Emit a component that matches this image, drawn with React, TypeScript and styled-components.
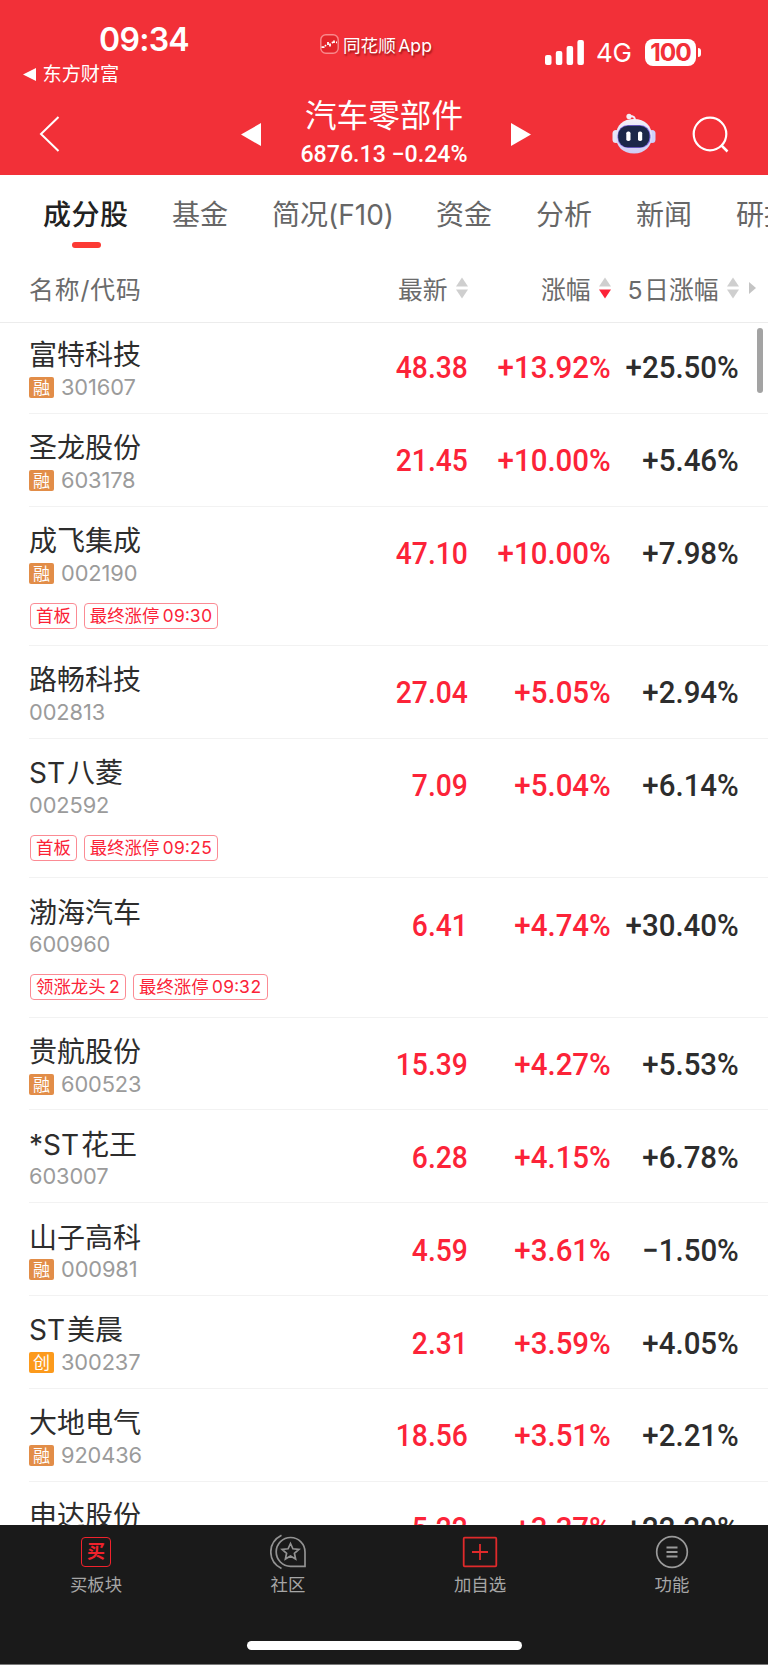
import React from "react";
import styled, { createGlobalStyle } from "styled-components";

const GlobalStyle = createGlobalStyle`
  * { box-sizing: border-box; }
  body { margin: 0; background: #fff; }
`;

const text = `"Inter", "Noto Sans CJK SC", sans-serif`;
const digits = `"Roboto", "Noto Sans CJK SC", sans-serif`;

const Screen = styled.div`
  display: flex;
  flex-direction: column;
  width: 768px;
  height: 1665px;
  overflow: hidden;
  background: #fff;
  font-family: ${text};
  color: #2d2d2d;
  white-space: nowrap;
`;

const Header = styled.header`
  flex: none;
  height: 174.5px;
  background: #f23038;
  color: #fff;
`;

const StatusBar = styled.div`
  display: grid;
  grid-template-columns: 320px 1fr auto;
  height: 90px;
  padding-right: 67px;
`;

const StatusLeft = styled.div`
  padding-top: 20px;
`;

const Clock = styled.div`
  padding-left: 99px;
  font-size: 32px;
  line-height: 40px;
  font-weight: 600;
  letter-spacing: -0.7px;
`;

const BackApp = styled.div`
  display: flex;
  align-items: center;
  gap: 7px;
  padding-left: 22.5px;
  margin-top: 1px;
  font-size: 19.2px;
  line-height: 27px;
`;

const Source = styled.div`
  display: flex;
  align-items: center;
  gap: 4px;
  height: 20px;
  margin-top: 34px;
  font-size: 17.6px;
  word-spacing: -2.5px;
  text-shadow: 1px 2px 2px rgba(90, 0, 0, 0.6);
`;

const Signals = styled.div`
  display: flex;
  align-items: center;
  height: 28px;
  margin-top: 38px;
`;

const Network = styled.span`
  margin: 2px 14px 0 12px;
  width: 35px;
  font-size: 26px;
  line-height: 28px;
  letter-spacing: -0.4px;
`;

const Battery = styled.div`
  width: 51px;
  height: 27px;
  border-radius: 8px;
  background: #fff;
  color: #f23038;
  font-size: 24.5px;
  font-weight: 700;
  line-height: 27px;
  letter-spacing: -1px;
  text-align: center;
`;

const BatteryTip = styled.div`
  width: 3px;
  height: 9px;
  margin-left: 2px;
  border-radius: 0 4px 4px 0;
  background: #fff;
`;

const TitleBar = styled.div`
  display: flex;
  align-items: center;
  height: 84px;
  padding: 4px 39px 0 39px;

  svg { flex: none; display: block; }
`;

const TitleNav = styled.div`
  display: flex;
  align-items: center;
  justify-content: space-between;
  width: 290px;
  margin-left: 181px;
  margin-right: 81px;
`;

const TitleText = styled.div`
  display: flex;
  flex-direction: column;
  align-items: center;
  margin-right: 4px;
`;

const Title = styled.div`
  font-size: 31.6px;
  line-height: 40px;
  font-weight: 400;
`;

const SubTitle = styled.div`
  width: 166px;
  display: flex;
  justify-content: center;
  font-family: ${digits};
  font-size: 24px;
  font-weight: 500;
  line-height: 36px;
  white-space: pre;
  transform: scaleX(0.965);
`;

const Tabs = styled.nav`
  flex: none;
  display: flex;
  height: 83.5px;
  padding: 21px 0 0 43px;
  font-size: 28px;
  line-height: 38px;
`;

const Tab = styled.div<{ $active?: boolean; $width: number }>`
  flex: none;
  display: flex;
  flex-direction: column;
  align-items: flex-start;
  width: ${(p) => p.$width}px;
  color: ${(p) => (p.$active ? "#222" : "#666")};
  font-weight: ${(p) => (p.$active ? 500 : 400)};
  letter-spacing: ${(p) => (p.$active ? 0.5 : 0)}px;

  &::after {
    content: "";
    display: ${(p) => (p.$active ? "block" : "none")};
    width: 29px;
    height: 6px;
    margin: 8px 0 0 29px;
    border-radius: 3px;
    background: #fc3a34;
  }
`;

const columns = `
  display: grid;
  grid-template-columns: 1fr 140px 143px 128px;
`;

const TableHead = styled.div`
  ${columns}
  flex: none;
  height: 65px;
  padding: 0 29px 5px 29px;
  align-items: center;
  border-bottom: 1px solid #ececec;
  font-size: 24.8px;
  color: #6b6b6b;
`;

const HeadCell = styled.div<{ $shift?: number; $tracking?: number }>`
  display: flex;
  justify-content: flex-end;
  align-items: center;
  gap: 8.5px;
  margin-right: ${(p) => p.$shift ?? 0}px;
  letter-spacing: ${(p) => p.$tracking ?? 0}px;
  word-spacing: -5.5px;

  &:first-child { justify-content: flex-start; }
`;

const List = styled.main`
  position: relative;
  flex: 1;
  min-height: 0;
  overflow: hidden;
  margin-top: -2px;
`;

const Scrollbar = styled.div`
  position: absolute;
  top: 7px;
  right: 5px;
  width: 6px;
  height: 65px;
  border-radius: 3px;
  background: #a3a3a3;
`;

const Row = styled.div<{ $tall: boolean }>`
  ${columns}
  height: ${(p) => (p.$tall ? 139.35 : 92.87)}px;
  margin-left: 29px;
  padding-right: 30px;
  align-content: start;
  border-bottom: 1px solid #f2f2f2;
`;

const Stock = styled.div`
  padding-top: 15.3px;
`;

const Name = styled.div`
  height: 37.2px;
  font-size: 28px;
  line-height: 38px;
  word-spacing: -6px;
`;

const CodeLine = styled.div`
  display: flex;
  align-items: center;
  gap: 7px;
  height: 28px;
  font-size: 21.8px;
  letter-spacing: -0.1px;
  color: #9b9b9b;
`;

const Code = styled.span`
  line-height: 26px;
  margin-bottom: 1px;
`;

const Badge = styled.span<{ $color: string }>`
  width: 25px;
  height: 21px;
  border-radius: 2px;
  background: ${(p) => p.$color};
  color: #fff;
  font-size: 17px;
  line-height: 22px;
  letter-spacing: 0;
  text-align: center;
`;

const Tags = styled.div`
  display: flex;
  gap: 7px;
  margin: 15.5px 0 0 1px;
`;

const Tag = styled.span`
  height: 26px;
  padding: 0 5px;
  border: 1px solid #fb8b94;
  border-radius: 4px;
  color: #fb2337;
  font-size: 17.4px;
  line-height: 24px;
  word-spacing: -1.5px;
  font-feature-settings: "tnum";
`;

const Value = styled.div<{ $red?: boolean; $stretch: number }>`
  display: flex;
  justify-content: flex-end;
  padding-top: 27.4px;
  font-family: ${digits};
  font-size: 31px;
  line-height: 40px;
  font-weight: 500;
  color: ${(p) => (p.$red ? "#fc2338" : "#2d2d2d")};
  transform: translateX(0.8px) scaleX(${(p) => p.$stretch});
  transform-origin: right center;
`;

const BottomBar = styled.footer`
  flex: none;
  height: 140px;
  background: #1a1a1a;
  border-bottom: 1px solid #7a7a7a;
`;

const Actions = styled.div`
  display: grid;
  grid-template-columns: repeat(4, 1fr);
  height: 116px;
  padding-top: 9px;
`;

const Action = styled.div`
  display: flex;
  flex-direction: column;
  align-items: center;
  font-size: 17.4px;
  line-height: 26px;
  color: #a6a6a6;

  svg { display: block; margin-bottom: 2px; }
`;

const BuyIcon = styled.span`
  width: 30px;
  height: 30px;
  margin: 3px 0 5px;
  border: 1.6px solid #f0222c;
  border-radius: 4px;
  color: #f0222c;
  font-size: 18px;
  font-weight: 700;
  line-height: 27px;
  text-align: center;
`;

const HomeIndicator = styled.div`
  width: 275px;
  height: 9px;
  margin: 0 auto;
  border-radius: 5px;
  background: #fff;
`;

const SortArrows = ({ down }: { down?: boolean }) => (
  <svg width="12" height="22" viewBox="0 0 12 22">
    <path d="M6 0.5 12 9.5H0Z" fill="#cfcfcf" />
    <path d="M6 21.5 12 12.5H0Z" fill={down ? "#fc2338" : "#cfcfcf"} />
  </svg>
);

const AppLogo = () => (
  <svg width="19" height="20" viewBox="0 0 19 20">
    <rect x="0.8" y="0.8" width="17.4" height="18.4" rx="5" fill="#e3242b" stroke="#f9888b" strokeWidth="1.4" />
    <path d="M1.5 13.2h3M5 12.2l1-1M8 8v3M10 9.5v3M12 9l1-1M14 6.5v2.5M16 8.3h1" stroke="#fff" strokeWidth="1.8" fill="none" />
  </svg>
);

const Robot = () => (
  <svg width="44" height="42" viewBox="0 0 44 42">
    <defs>
      <linearGradient id="shell" x1="0" y1="0" x2="0" y2="1">
        <stop offset="0" stopColor="#f4f1f8" />
        <stop offset="1" stopColor="#cfcdf4" />
      </linearGradient>
    </defs>
    <path d="M23 8c0-4-1-5-6-5" stroke="#f1eefb" strokeWidth="2" fill="none" />
    <circle cx="17" cy="3.4" r="2.6" fill="#f4eff6" />
    <rect x="0.5" y="17" width="7" height="13" rx="3.5" fill="#e6e4f8" />
    <rect x="36.5" y="17" width="7" height="13" rx="3.5" fill="#cfd0fb" />
    <path d="M22 6c11 0 18 7 18 17S33 40.5 22 40.5 4 34 4 23 11 6 22 6Z" fill="url(#shell)" />
    <rect x="5.5" y="12" width="33" height="23" rx="10.5" fill="#7d66dc" />
    <rect x="6.2" y="12.7" width="31.3" height="21.6" rx="9.8" fill="#1c2748" />
    <rect x="14.3" y="18.5" width="4.2" height="9.5" rx="1.8" fill="#fff" />
    <rect x="26" y="18.5" width="4.2" height="9.5" rx="1.8" fill="#fff" />
  </svg>
);

const CommunityIcon = () => (
  <svg width="36" height="36" viewBox="0 0 36 36" fill="none" stroke="#929292" strokeWidth="1.7">
    <path d="M35 32.3H20.5A14.4 14.4 0 1 1 35 18Z" />
    <path d="M11.5 1.3C4.5 5 .8 10.5.8 18s3.7 13 10.7 16.5" />
    <path d="m20.5 9.5 2.4 5.3 6 .6-4.5 3.9 1.2 5.7-5.1-3-5.1 3 1.2-5.7-4.5-3.9 6-.6Z" />
  </svg>
);

const AddIcon = () => (
  <svg width="36" height="36" viewBox="0 0 36 36" fill="none" stroke="#e02a2b" strokeWidth="1.8">
    <rect x="1.7" y="3.7" width="32.6" height="28.6" rx="1" />
    <path d="M10 18h16M18 10v16" />
  </svg>
);

const MenuIcon = () => (
  <svg width="36" height="36" viewBox="0 0 36 36" fill="none" stroke="#9a9a9a" strokeWidth="1.7">
    <circle cx="18" cy="18" r="15.3" />
    <path d="M12.5 13.5h11M12.5 18h11M12.5 22.5h11" strokeWidth="1.9" />
  </svg>
);

interface StockItem {
  name: string;
  code: string;
  badge?: string;
  tags?: string[];
  price: string;
  change: string;
  fiveDay: string;
}

const stocks: StockItem[] = [
  { name: "富特科技", code: "301607", badge: "融", price: "48.38", change: "+13.92%", fiveDay: "+25.50%" },
  { name: "圣龙股份", code: "603178", badge: "融", price: "21.45", change: "+10.00%", fiveDay: "+5.46%" },
  { name: "成飞集成", code: "002190", badge: "融", tags: ["首板", "最终涨停 09:30"], price: "47.10", change: "+10.00%", fiveDay: "+7.98%" },
  { name: "路畅科技", code: "002813", price: "27.04", change: "+5.05%", fiveDay: "+2.94%" },
  { name: "ST 八菱", code: "002592", tags: ["首板", "最终涨停 09:25"], price: "7.09", change: "+5.04%", fiveDay: "+6.14%" },
  { name: "渤海汽车", code: "600960", tags: ["领涨龙头 2", "最终涨停 09:32"], price: "6.41", change: "+4.74%", fiveDay: "+30.40%" },
  { name: "贵航股份", code: "600523", badge: "融", price: "15.39", change: "+4.27%", fiveDay: "+5.53%" },
  { name: "*ST 花王", code: "603007", price: "6.28", change: "+4.15%", fiveDay: "+6.78%" },
  { name: "山子高科", code: "000981", badge: "融", price: "4.59", change: "+3.61%", fiveDay: "−1.50%" },
  { name: "ST 美晨", code: "300237", badge: "创", price: "2.31", change: "+3.59%", fiveDay: "+4.05%" },
  { name: "大地电气", code: "920436", badge: "融", price: "18.56", change: "+3.51%", fiveDay: "+2.21%" },
  { name: "申达股份", code: "", price: "5.22", change: "+3.37%", fiveDay: "+22.29%" },
];

const tabs = [
  { label: "成分股", width: 129 },
  { label: "基金", width: 100 },
  { label: "简况(F10)", width: 164 },
  { label: "资金", width: 100 },
  { label: "分析", width: 100 },
  { label: "新闻", width: 100 },
  { label: "研报", width: 80 },
];

export default function App() {
  return (
    <Screen>
      <GlobalStyle />
      <Header>
        <StatusBar>
          <StatusLeft>
            <Clock>09:34</Clock>
            <BackApp>
              <svg width="13" height="13" viewBox="0 0 13 13"><path d="M0 6.5 13 0v13Z" fill="#fff" /></svg>
              东方财富
            </BackApp>
          </StatusLeft>
          <Source><AppLogo />同花顺 App</Source>
          <Signals>
            <svg width="39" height="25" viewBox="0 0 39 25" fill="#fff">
              <rect x="0" y="15" width="6.5" height="10" rx="2" />
              <rect x="10.8" y="11" width="6.5" height="14" rx="2" />
              <rect x="21.6" y="6" width="6.5" height="19" rx="2" />
              <rect x="32.4" y="0" width="6.5" height="25" rx="2" />
            </svg>
            <Network>4G</Network>
            <Battery>100</Battery>
            <BatteryTip />
          </Signals>
        </StatusBar>
        <TitleBar>
          <svg width="21" height="36" viewBox="0 0 21 36"><path d="M19.5 1 2 18l17.5 17" fill="none" stroke="#fff" strokeWidth="2" /></svg>
          <TitleNav>
            <svg width="20" height="23" viewBox="0 0 20 23"><path d="M0 11.5 20 0v23Z" fill="#fff" /></svg>
            <TitleText>
              <Title>汽车零部件</Title>
              <SubTitle>6876.13 −0.24%</SubTitle>
            </TitleText>
            <svg width="20" height="23" viewBox="0 0 20 23"><path d="M20 11.5 0 0v23Z" fill="#fff" /></svg>
          </TitleNav>
          <Robot />
          <svg width="37" height="37" viewBox="0 0 37 37" style={{ marginLeft: "auto" }}>
            <circle cx="18" cy="18" r="16.3" fill="none" stroke="#fff" strokeWidth="2.2" />
            <path d="m29 29 6.5 6.5" stroke="#fff" strokeWidth="2.5" />
          </svg>
        </TitleBar>
      </Header>
      <Tabs>
        {tabs.map((t, i) => (
          <Tab key={t.label} $active={i === 0} $width={t.width}>{t.label}</Tab>
        ))}
      </Tabs>
      <TableHead>
        <HeadCell $tracking={0.9}>名称/代码</HeadCell>
        <HeadCell>最新<SortArrows /></HeadCell>
        <HeadCell>涨幅<SortArrows down /></HeadCell>
        <HeadCell $shift={-16.5}>
          5 日涨幅<SortArrows />
          <svg width="7" height="12" viewBox="0 0 7 12" style={{ marginLeft: 1 }}><path d="M0 0 7 6 0 12Z" fill="#c4c4c4" /></svg>
        </HeadCell>
      </TableHead>
      <List>
        {stocks.map((s) => (
          <Row key={s.name} $tall={!!s.tags}>
            <Stock>
              <Name>{s.name}</Name>
              <CodeLine>
                {s.badge && <Badge $color={s.badge === "创" ? "#fc9a1c" : "#e28d48"}>{s.badge}</Badge>}
                <Code>{s.code}</Code>
              </CodeLine>
              {s.tags && <Tags>{s.tags.map((t) => <Tag key={t}>{t}</Tag>)}</Tags>}
            </Stock>
            <Value $red $stretch={0.91}>{s.price}</Value>
            <Value $red $stretch={0.95}>{s.change}</Value>
            <Value $stretch={0.95}>{s.fiveDay}</Value>
          </Row>
        ))}
        <Scrollbar />
      </List>
      <BottomBar>
        <Actions>
          <Action><BuyIcon>买</BuyIcon>买板块</Action>
          <Action><CommunityIcon />社区</Action>
          <Action><AddIcon />加自选</Action>
          <Action><MenuIcon />功能</Action>
        </Actions>
        <HomeIndicator />
      </BottomBar>
    </Screen>
  );
}
